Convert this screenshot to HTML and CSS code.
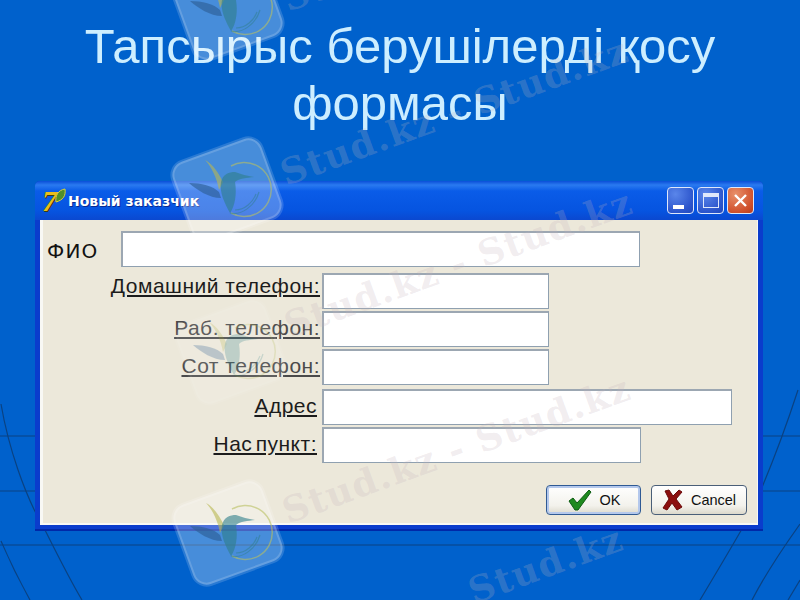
FILE: index.html
```html
<!DOCTYPE html>
<html lang="kk">
<head>
    <meta charset="UTF-8">
    <meta name="viewport" content="width=device-width, initial-scale=1.0">
    <title>Тапсырыс берушілерді қосу формасы</title>
    <link rel="stylesheet" href="styles.css">
</head>
<body>
    <div class="slide">
        <!-- background lines of the slide theme -->
        <svg class="bg-lines" width="800" height="600" viewBox="0 0 800 600">
            <g fill="none" stroke="#0a4282" stroke-width="1.2">
                <path d="M0 436H800M0 491H800M0 545H800"/>
                <path d="M1 404C8 445 24 495 46 532C58 556 70 580 82 600"/>
                <path d="M1 541C10 562 20 582 30 600"/>
                <path d="M798 390C785 430 768 475 750 515C730 550 712 580 700 600"/>
                <path d="M800 524C785 545 765 575 752 600"/>
                <path d="M800 580L788 600"/>
            </g>
        </svg>

        <h1 class="slide-title">Тапсырыс берушілерді қосу<br>формасы</h1>

        <div class="window">
            <div class="titlebar">
                <span class="app-icon">7<svg class="app-leaf" width="11" height="15" viewBox="0 0 11 15"><path d="M1 14C0 8 3 2 10 1C11 8 8 12 1 14Z" fill="#4f8f2a" stroke="#d8d040" stroke-width="1"/></svg></span>
                <span class="window-title">Новый заказчик</span>
                <div class="window-buttons">
                    <div class="win-btn"><span class="min-glyph"></span></div>
                    <div class="win-btn"><span class="max-glyph"></span></div>
                    <div class="win-btn win-close">
                        <svg width="17" height="17" viewBox="0 0 17 17"><path d="M3 3L14 14M14 3L3 14" stroke="#fff" stroke-width="2.4"/></svg>
                    </div>
                </div>
            </div>
            <div class="client">
                <div class="row-name">
                    <span class="name-label">ФИО</span>
                    <div class="field field-name"></div>
                </div>
                <div class="row">
                    <span class="label label-high">Домашний телефон:</span>
                    <div class="field field-short"></div>
                </div>
                <div class="row row-tight">
                    <span class="label label-grey">Раб. телефон:</span>
                    <div class="field field-short"></div>
                </div>
                <div class="row row-tight">
                    <span class="label label-grey">Сот телефон:</span>
                    <div class="field field-short"></div>
                </div>
                <div class="row row-address">
                    <span class="label label-inset">Адрес</span>
                    <div class="field field-long"></div>
                </div>
                <div class="row row-tight">
                    <span class="label label-inset">Нас пункт:</span>
                    <div class="field field-mid"></div>
                </div>
                <div class="actions">
                    <div class="btn btn-default">
                        <svg width="26" height="24" viewBox="0 0 26 24"><path d="M2 13L6 10L10 15L22 2L24 4L11 22H8Z" fill="#1f8a1f" stroke="#0d5c12" stroke-width="1"/></svg>
                        <span>OK</span>
                    </div>
                    <div class="btn">
                        <svg width="22" height="24" viewBox="0 0 22 24"><path d="M3 3L7 2L11 8L17 2L20 4L14 11L20 19L15 22L10 15L5 22L1 20L7 11Z" fill="#8c0f0f" stroke="#6a0a0a" stroke-width="1"/></svg>
                        <span>Cancel</span>
                    </div>
                </div>
            </div>
        </div>

        <!-- watermark over everything -->
        <svg class="watermark" width="800" height="600" viewBox="0 0 800 600">
            <defs>
                <g id="wm-logo">
                    <rect x="-47" y="-42" width="94" height="84" rx="14" transform="rotate(-20)" fill="#ffffff" fill-opacity="0.28" stroke="#ffffff" stroke-opacity="0.16" stroke-width="4"/>
                    <path d="M4 -24A27 27 0 1 1 4 23" fill="none" stroke="#b9c060" stroke-opacity="0.6" stroke-width="1.5"/>
                    <path d="M3 23C14 26 28 16 32 2M8 20C18 20 26 12 29 4" fill="none" stroke="#2f7f8a" stroke-opacity="0.5" stroke-width="1.2"/>
                    <path d="M-38 -7C-26 -7 -14 -4 -8 2L-6 8C-18 8 -30 0 -38 -7Z" fill="#2e5f96" fill-opacity="0.65"/>
                    <path d="M-22 -30C-14 -26 -8 -16 -4 -8L-8 0C-10 -12 -16 -24 -22 -30Z" fill="#b9b850" fill-opacity="0.6"/>
                    <path d="M-6 -8C-4 -16 2 -18 8 -18C14 -16 20 -14 27 -13C20 -12 12 -12 8 -8C10 4 8 16 3 23C-2 14 -8 2 -6 -8Z" fill="#2f7f8a" fill-opacity="0.6"/>
                </g>
                <text id="wm-text" font-family="'DejaVu Serif', serif" font-weight="700" font-size="36" letter-spacing="1.4">Stud.kz</text>
                <text id="wm-long" font-family="'DejaVu Serif', serif" font-weight="700" font-size="36" letter-spacing="1.4">Stud.kz - Stud.kz</text>
            </defs>
            <use href="#wm-logo" transform="translate(228 8)"/>
            <use href="#wm-logo" transform="translate(227 190)"/>
            <use href="#wm-logo" transform="translate(231 352)" opacity="0.4"/>
            <use href="#wm-logo" transform="translate(228 533)"/>
            <g fill="#c4b4bc" fill-opacity="0.24">
                <use href="#wm-long" transform="translate(286 186) rotate(-20)"/>
                <use href="#wm-long" transform="translate(290 338) rotate(-20)"/>
                <use href="#wm-long" transform="translate(288 524) rotate(-20)"/>
                <use href="#wm-text" transform="translate(474 604) rotate(-20)"/>
                <use href="#wm-text" transform="translate(288 12) rotate(-20)"/>
            </g>
        </svg>
    </div>
</body>
</html>
```

FILE: styles.css
```css
body {
    margin: 0;
    background-color: #0061cc;
    font-family: "Liberation Sans", Arial, sans-serif;
}
.slide {
    position: relative;
    width: 800px;
    height: 600px;
    overflow: hidden;
    background-color: #0061cc;
}
.bg-lines,
.watermark {
    position: absolute;
    left: 0;
    top: 0;
}
.watermark {
    pointer-events: none;
}
.slide-title {
    position: relative;
    margin: 0;
    padding-top: 18px;
    height: 181px;
    box-sizing: border-box;
    text-align: center;
    color: #cdeeff;
    font-size: 49px;
    font-weight: 400;
    line-height: 57px;
}
.window {
    position: relative;
    width: 728px;
    height: 350px;
    margin-left: 35px;
    box-sizing: border-box;
    display: flex;
    flex-direction: column;
    padding: 0 5px 4px 5px;
    background-color: #0a3ccc;
    border-radius: 5px 5px 0 0;
    border-bottom: 2px solid #0028a8;
}
.titlebar {
    display: flex;
    align-items: center;
    height: 39px;
    margin: 0 -5px;
    padding: 0 9px 0 7px;
    flex-shrink: 0;
    border-radius: 5px 5px 0 0;
    background: linear-gradient(to bottom, #0a4fd8 0, #2a7af0 4px, #0a5ce8 10px, #0654e0 30px, #0a48d0 39px);
}
.app-icon {
    position: relative;
    width: 26px;
    color: #e8bd1c;
    font-family: "Liberation Serif", serif;
    font-style: italic;
    font-weight: 700;
    font-size: 30px;
    line-height: 26px;
    text-shadow: 1px 1px 0 #3a3a10;
}
.app-leaf {
    position: absolute;
    left: 13px;
    top: 0;
}
.window-title {
    color: #ffffff;
    font-family: "DejaVu Sans", sans-serif;
    font-weight: 700;
    font-size: 14px;
    text-shadow: 1px 1px 0 #0a2a90;
}
.window-buttons {
    display: flex;
    gap: 3px;
    margin-left: auto;
}
.win-btn {
    width: 27px;
    height: 27px;
    box-sizing: border-box;
    display: flex;
    align-items: center;
    justify-content: center;
    position: relative;
    border: 1px solid #dfe8fb;
    border-radius: 4px;
    background: radial-gradient(circle at 30% 25%, #5a86ea, #2c55cc 70%, #2248bc);
}
.win-close {
    background: radial-gradient(circle at 30% 25%, #e8906a, #d0502c 70%, #b83c1c);
}
.min-glyph {
    align-self: flex-end;
    width: 11px;
    height: 4px;
    margin: 0 5px 4px 0;
    background-color: #ffffff;
}
.max-glyph {
    width: 16px;
    height: 15px;
    box-sizing: border-box;
    border: 1px solid #dfe8fb;
    border-top-width: 4px;
}
.client {
    flex: 1;
    position: relative;
    box-sizing: border-box;
    padding-top: 11px;
    background-color: #ece8da;
    border: 2px solid #f8f8f4;
    border-width: 0 1px 2px 3px;
}
.row-name {
    display: flex;
    align-items: center;
    height: 36px;
}
.name-label {
    width: 78px;
    padding: 3px 0 0 4px;
    box-sizing: border-box;
    color: #111111;
    font-family: "DejaVu Sans", sans-serif;
    font-size: 20px;
    letter-spacing: 1.2px;
}
.row {
    display: flex;
    align-items: center;
    height: 36px;
    margin-top: 6px;
}
.row-tight {
    margin-top: 2px;
}
.row-address {
    margin-top: 4px;
}
.label {
    width: 277px;
    flex-shrink: 0;
    margin-right: 2px;
    margin-top: -3px;
    text-align: right;
    color: #1c1c1c;
    font-size: 21px;
    letter-spacing: 0.5px;
    line-height: 22px;
    text-decoration: underline;
    text-underline-offset: 2px;
    white-space: nowrap;
}
.label-high {
    margin-top: -10px;
}
.label-grey {
    color: #4a4a4a;
}
.label-inset {
    padding-right: 3px;
    width: 274px;
    color: #1c1c1c;
    word-spacing: -3px;
}
.field {
    height: 36px;
    box-sizing: border-box;
    background-color: #ffffff;
    border: 2px solid #a9b4bd;
    border-width: 2px 1px 1px 2px;
    border-color: #9ca7b2 #8fa0b0 #8fa0b0 #9ca7b2;
}
.field-name {
    width: 519px;
}
.field-short {
    width: 227px;
}
.field-long {
    width: 410px;
}
.field-mid {
    width: 319px;
}
.actions {
    display: flex;
    justify-content: flex-end;
    gap: 10px;
    margin-top: 22px;
    padding-right: 10px;
}
.btn {
    width: 96px;
    height: 30px;
    box-sizing: border-box;
    display: flex;
    align-items: center;
    justify-content: center;
    gap: 7px;
    color: #111111;
    font-size: 14.5px;
    border: 1px solid #4a5f78;
    border-radius: 4px;
    background: linear-gradient(to bottom, #ffffff, #f3f2ec 70%, #dcd9cc);
}
.btn-default {
    width: 95px;
    border-color: #2f5a94;
    box-shadow: inset 0 0 0 2px #b4c8ec;
}
```
